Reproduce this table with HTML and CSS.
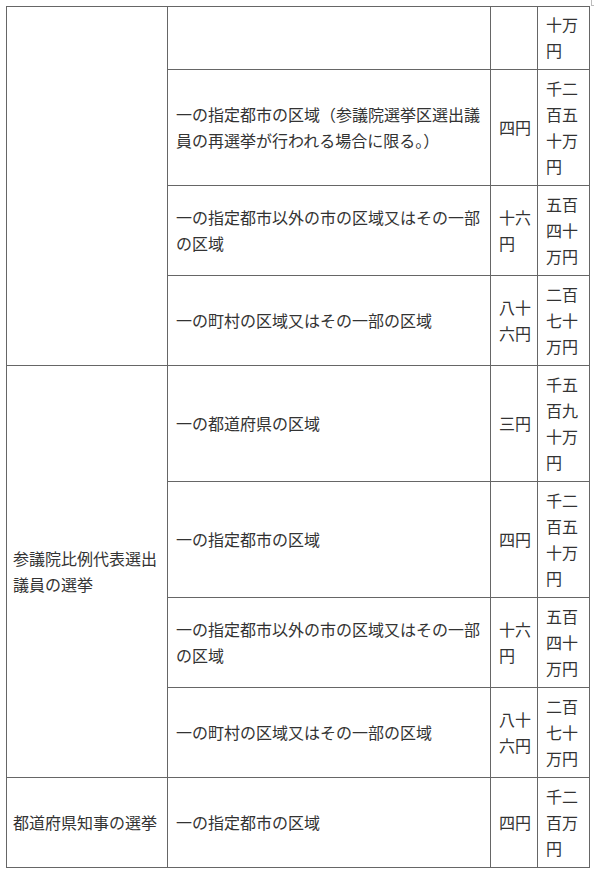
FILE: index.html
```html
<!DOCTYPE html>
<html lang="ja">
<head>
<meta charset="utf-8">
<link rel="stylesheet" href="styles.css">
</head>
<body>
<div class="edge"></div>
<table class="tbl">
<colgroup>
<col class="c1"><col class="c2"><col class="c3"><col class="c4">
</colgroup>
<tbody>
<tr class="r2">
<td rowspan="4"></td>
<td></td>
<td></td>
<td>十万<br>円</td>
</tr>
<tr>
<td>一の指定都市の区域（参議院選挙区選出議員の再選挙が行われる場合に限る。）</td>
<td>四円</td>
<td>千二百五十万円</td>
</tr>
<tr>
<td>一の指定都市以外の市の区域又はその一部の区域</td>
<td>十六円</td>
<td>五百四十万円</td>
</tr>
<tr>
<td>一の町村の区域又はその一部の区域</td>
<td>八十六円</td>
<td>二百七十万円</td>
</tr>
<tr>
<td rowspan="4">参議院比例代表選出議員の選挙</td>
<td>一の都道府県の区域</td>
<td>三円</td>
<td>千五百九十万円</td>
</tr>
<tr>
<td>一の指定都市の区域</td>
<td>四円</td>
<td>千二百五十万円</td>
</tr>
<tr>
<td>一の指定都市以外の市の区域又はその一部の区域</td>
<td>十六円</td>
<td>五百四十万円</td>
</tr>
<tr>
<td>一の町村の区域又はその一部の区域</td>
<td>八十六円</td>
<td>二百七十万円</td>
</tr>
<tr>
<td>都道府県知事の選挙</td>
<td>一の指定都市の区域</td>
<td>四円</td>
<td>千二百万円</td>
</tr>
</tbody>
</table>
</body>
</html>
```

FILE: styles.css
```css
html, body {
  margin: 0;
  padding: 0;
  background: #ffffff;
}
body {
  font-family: "Noto Sans CJK JP", "Noto Sans", sans-serif;
  font-size: 16px;
  color: #333333;
  position: relative;
}
.edge {
  position: absolute;
  left: 591px;
  top: 0;
  width: 2px;
  height: 5px;
  border-left: 1px solid #bbbbbb;
  border-bottom: 1px solid #bbbbbb;
}
.tbl {
  margin: 6px 0 0 6px;
  border-collapse: collapse;
  table-layout: fixed;
  width: 583px;
}
.c1 { width: 161px; }
.c2 { width: 323px; }
.c3 { width: 47px; }
.c4 { width: 52px; }
.tbl td {
  border: 1px solid #666666;
  padding: 5px 6px 6px 8px;
  line-height: 26px;
  vertical-align: middle;
  text-align: left;
  word-break: break-all;
}
.tbl tr.r2 td {
  padding-top: 4px;
}
.tbl td:first-child[rowspan], .tbl tr:last-child td:first-child {
  padding-left: 6px;
}
```
